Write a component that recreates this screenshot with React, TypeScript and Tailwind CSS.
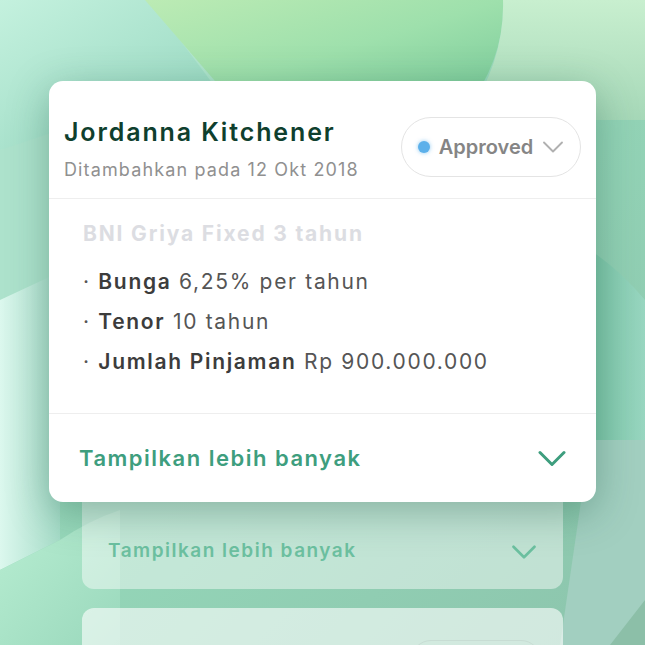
import React from "react";

function Chevron({ className, stroke = 3 }: { className?: string; stroke?: number }) {
  return (
    <svg viewBox="0 0 28 16" className={className} fill="none">
      <path d="M2 2 L14 14 L26 2" stroke="currentColor" strokeWidth={stroke} strokeLinecap="round" strokeLinejoin="round" />
    </svg>
  );
}

function Background() {
  return (
    <svg className="absolute inset-0 h-full w-full" viewBox="0 0 645 645" preserveAspectRatio="none">
      <defs>
        <linearGradient id="base" x1="0" y1="0" x2="1" y2="1">
          <stop offset="0" stopColor="#c6f1de" />
          <stop offset="0.5" stopColor="#94d6b8" />
          <stop offset="1" stopColor="#8cc4ac" />
        </linearGradient>
        <linearGradient id="blob" x1="0" y1="0" x2="1" y2="1">
          <stop offset="0" stopColor="#bcebb4" />
          <stop offset="0.5" stopColor="#9ee0ac" />
          <stop offset="1" stopColor="#76c898" />
        </linearGradient>
        <linearGradient id="tl" x1="0" y1="0" x2="1" y2="1">
          <stop offset="0" stopColor="#c4f1de" />
          <stop offset="1" stopColor="#90d4bc" />
        </linearGradient>
        <linearGradient id="tr" x1="0" y1="0" x2="0" y2="1">
          <stop offset="0" stopColor="#c8efcf" />
          <stop offset="1" stopColor="#a6d8b8" />
        </linearGradient>
        <linearGradient id="left" x1="0" y1="0" x2="1" y2="0">
          <stop offset="0" stopColor="#dcf8ee" />
          <stop offset="1" stopColor="#a6dcc8" />
        </linearGradient>
        <linearGradient id="right" x1="0" y1="0" x2="1" y2="0">
          <stop offset="0" stopColor="#7cc6a8" />
          <stop offset="1" stopColor="#98d6c0" />
        </linearGradient>
        <linearGradient id="bl" x1="0" y1="0" x2="1" y2="1">
          <stop offset="0" stopColor="#b8eed2" />
          <stop offset="1" stopColor="#9ad8bc" />
        </linearGradient>
      </defs>
      <rect width="645" height="645" fill="url(#base)" />
      <path d="M0 0 H150 L240 120 L0 150 Z" fill="url(#tl)" />
      <path d="M145 0 H503 Q505 60 465 110 H240 Z" fill="url(#blob)" />
      <path d="M503 0 H645 V120 H465 Q505 60 503 0 Z" fill="url(#tr)" />
      <path d="M0 150 L60 130 V275 L0 300 Z" fill="#ade2cc" />
      <path d="M0 300 L60 272 V540 L0 570 Z" fill="url(#left)" />
      <path d="M590 250 Q620 270 645 300 V440 H590 Z" fill="url(#right)" />
      <path d="M0 570 L60 540 Q90 520 120 510 V645 H0 Z" fill="url(#bl)" />
      <path d="M590 440 H645 V645 H560 Z" fill="#a2cfc0" />
      <path d="M610 645 L645 600 V645 Z" fill="#8cbfa8" />
    </svg>
  );
}

export default function App() {
  const font = { fontFamily: "Inter, 'Noto Sans', sans-serif" };
  return (
    <div className="relative h-[645px] w-[645px] overflow-hidden" style={font}>
      <Background />
      <div className="relative flex flex-col px-[49px] pt-[81px]">
        <div className="relative z-10 rounded-[14px] bg-white shadow-[0_10px_40px_rgba(20,80,60,0.35)]">
          <div className="flex items-start justify-between border-b border-[#eeeeee] pl-[15px] pr-[15px] pt-[36px] pb-[17px]">
            <div className="flex flex-col">
              <div className="text-[25px] font-semibold leading-[30px] tracking-[0.075em] text-[#0f3f2e]">Jordanna Kitchener</div>
              <div className="mt-[12px] text-[18px] leading-[22px] tracking-[0.063em] text-[#909090]">Ditambahkan pada 12 Okt 2018</div>
            </div>
            <div className="flex h-[60px] w-[180px] items-center justify-center gap-[9px] rounded-full border border-[#e4e4e4]">
              <span className="h-[12px] w-[12px] rounded-full bg-[#5cb0ea] shadow-[0_0_4px_rgba(92,176,234,0.7)]" />
              <span className="text-[20px] font-semibold text-[#858585]">Approved</span>
              <Chevron className="h-[12px] w-[22px] text-[#b0b0b0]" stroke={2.5} />
            </div>
          </div>
          <div className="flex flex-col border-b border-[#eeeeee] pl-[34px] pt-[22px] pb-[38px]">
            <div className="text-[21px] font-bold leading-[26px] tracking-[0.087em] text-[#dcdde2]">BNI Griya Fixed 3 tahun</div>
            <div className="mt-[22px] flex flex-col gap-[14px] text-[21px] leading-[26px] tracking-[0.08em] text-[#555555]">
              <div>· <b className="font-semibold text-[#3c3c3c]">Bunga</b> 6,25% per tahun</div>
              <div>· <b className="font-semibold text-[#3c3c3c]">Tenor</b> 10 tahun</div>
              <div>· <b className="font-semibold text-[#3c3c3c]">Jumlah Pinjaman</b> Rp 900.000.000</div>
            </div>
          </div>
          <div className="flex h-[88px] items-center justify-between pl-[30px] pr-[30px]">
            <span className="text-[22px] font-semibold tracking-[0.068em] text-[#3e9e7e]">Tampilkan lebih banyak</span>
            <Chevron className="h-[17px] w-[28px] text-[#3e9e7e]" stroke={3} />
          </div>
        </div>
        <div className="mx-[33px] -mt-[20px] flex h-[107px] items-end justify-between rounded-b-[12px] bg-white/45 px-[26px] pb-[24px]">
          <span className="text-[19px] font-semibold tracking-[0.079em] text-[#6cc0a0]">Tampilkan lebih banyak</span>
          <Chevron className="mb-[6px] h-[14px] w-[26px] text-[#6cc0a0]" stroke={3} />
        </div>
        <div className="mx-[33px] mt-[19px] flex h-[60px] justify-end rounded-t-[12px] bg-white/60 pr-[22px] pt-[32px]">
          <div className="h-[40px] w-[130px] rounded-full border border-[#c8ddd4]" />
        </div>
      </div>
    </div>
  );
}
